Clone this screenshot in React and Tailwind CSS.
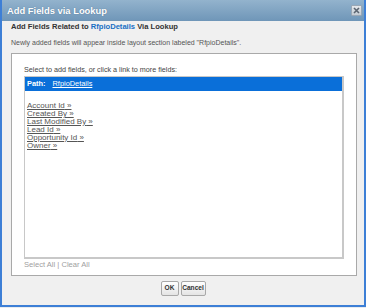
export default function App() {
  const links = ["Account Id", "Created By", "Last Modified By", "Lead Id", "Opportunity Id", "Owner"];
  return (
    <div className="w-[366px] h-[308px] bg-[#e8ecf0] font-['Liberation_Sans',Arial,sans-serif]">
      <div className="h-[307px] flex flex-col border-x-2 border-b-2 border-[#3d7fd6] bg-[#f0f0f0]">
        <div className="h-[21px] shrink-0 flex items-center justify-between bg-gradient-to-b from-[#93b3cd] to-[#6f96b8] pl-[5px] pr-[2px]">
          <span className="text-white font-bold text-[9.4px] leading-none [text-shadow:0_0_1px_#4a6e8e]">Add Fields via Lookup</span>
          <div className="w-[11px] h-[11px] bg-gradient-to-b from-[#e4e8ec] to-[#c4ccd4] border border-[#9aa8b6] rounded-[1px] flex items-center justify-center">
            <svg width="7" height="7" viewBox="0 0 7 7">
              <path d="M1 1L6 6M6 1L1 6" stroke="#5a6470" strokeWidth="1.6" />
            </svg>
          </div>
        </div>
        <div className="flex-1 flex flex-col">
          <div className="pl-[9px] h-[12px] text-[7.6px] font-bold text-[#333] leading-[12px]">
            Add Fields Related to <span className="text-[#1a6fc4]">RfpioDetails</span> Via Lookup
          </div>
          <div className="pl-[9px] mt-[5px] h-[10px] text-[7px] text-[#555] leading-[10px]">
            Newly added fields will appear inside layout section labeled "RfpioDetails".
          </div>
          <div className="ml-[9px] mr-[7px] mt-[5px] h-[223px] border border-[#a9a9a9] bg-white px-[12px] flex flex-col">
            <div className="pt-[11px] h-[22px] text-[7.2px] text-[#444] leading-[10px]">
              Select to add fields, or click a link to more fields:
            </div>
            <div className="h-[183px] border border-[#c8c8c8] border-r-2 border-b-2 bg-white flex flex-col">
              <div className="h-[14px] bg-[#0a6fd9] flex items-center pl-[2px] text-[7.4px] text-white leading-none">
                <span className="font-bold">Path:</span>
                <span className="ml-[7px] underline">RfpioDetails</span>
              </div>
              <div className="pt-[11px] pl-[2px] flex flex-col">
                {links.map((l) => (
                  <span key={l} className="text-[8px] leading-[8px] h-[8px] text-[#555] underline">{l} »</span>
                ))}
              </div>
            </div>
            <div className="text-[7.6px] text-[#a0a0a0] leading-[10px] mt-[1px]">Select All | Clear All</div>
          </div>
          <div className="flex justify-center gap-[2px] mt-[5px]">
            <button className="h-[15px] w-[18px] border border-[#a8a8a8] rounded-[2px] bg-gradient-to-b from-white to-[#e4e4e4] text-[6.6px] font-bold text-[#333] leading-none">OK</button>
            <button className="h-[15px] w-[25px] border border-[#a8a8a8] rounded-[2px] bg-gradient-to-b from-white to-[#e4e4e4] text-[6.6px] font-bold text-[#333] leading-none">Cancel</button>
          </div>
        </div>
      </div>
    </div>
  );
}
